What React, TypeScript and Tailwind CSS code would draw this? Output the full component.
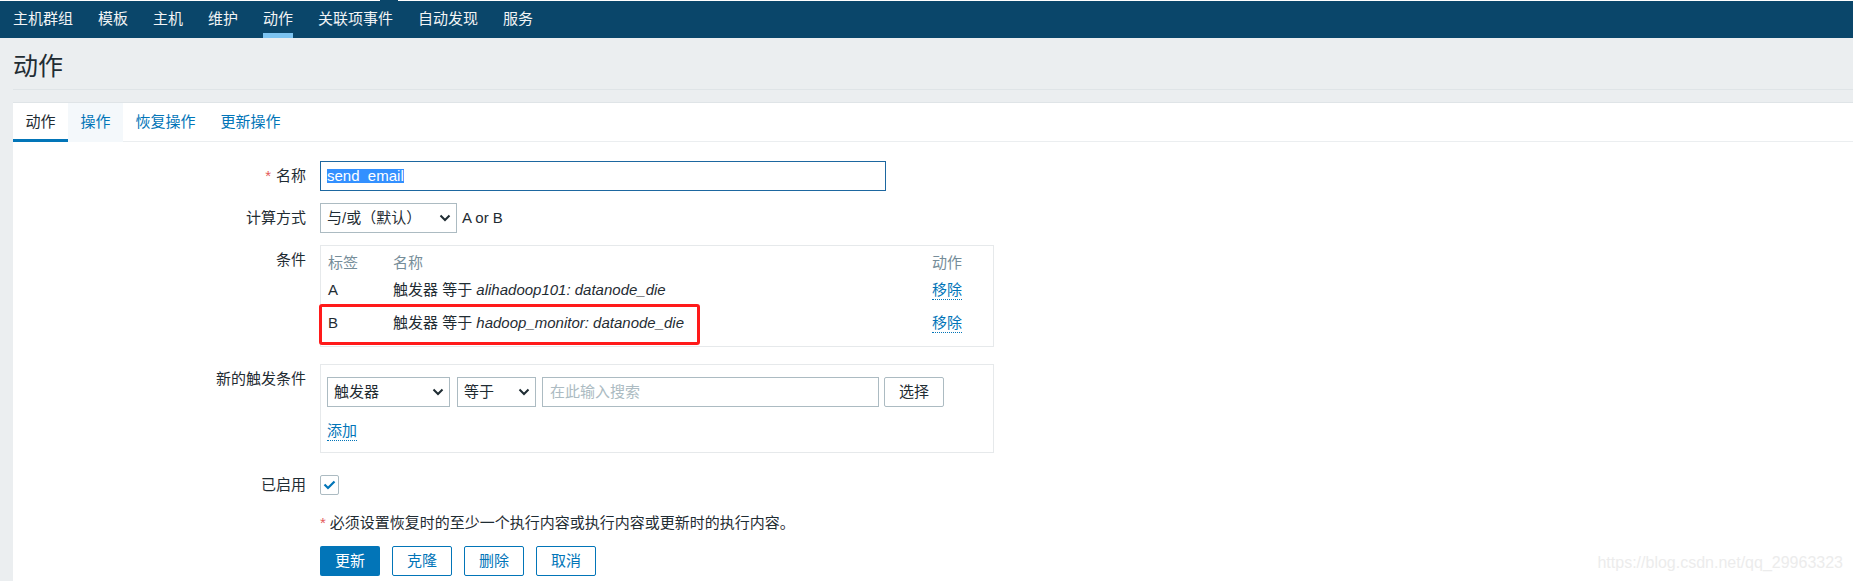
import React from "react";

const NAV = ["主机群组", "模板", "主机", "维护", "动作", "关联项事件", "自动发现", "服务"];
const TABS = ["动作", "操作", "恢复操作", "更新操作"];

function Chevron() {
  return (
    <svg width="12" height="8" viewBox="0 0 12 8" className="shrink-0">
      <path d="M1.5 1.5 6 6l4.5-4.5" stroke="#1f2c33" strokeWidth="2" fill="none" />
    </svg>
  );
}

function Select({ text, width }: { text: string; width: string }) {
  return (
    <div
      className={`${width} h-[30px] border border-[#acbbc2] bg-white flex items-center justify-between pl-[6px] pr-[5px] text-[#1f2c33]`}
    >
      <span className="[text-spacing-trim:space-all]">{text}</span>
      <Chevron />
    </div>
  );
}

function Row({
  label,
  required,
  top,
  children,
  className = "",
}: {
  label: string;
  required?: boolean;
  top?: boolean;
  children: React.ReactNode;
  className?: string;
}) {
  return (
    <div className={`flex ${top ? "items-start" : "items-center"} ${className}`}>
      <div
        className={`w-[293px] shrink-0 text-right text-[#1f2c33] leading-[20px] ${top ? "pt-[5px]" : ""}`}
      >
        {required && <span className="text-[#e45959] mr-[5px]">*</span>}
        {label}
      </div>
      <div className="ml-[14px] flex items-center">{children}</div>
    </div>
  );
}

function RemoveLink() {
  return (
    <span className="text-[#0275b8] border-b border-dotted border-[#0275b8] leading-[19px] inline-block">
      移除
    </span>
  );
}

export default function App() {
  return (
    <div className="h-[581px] overflow-hidden bg-[#ebeef0] flex flex-col font-['Liberation_Sans','Noto_Sans_CJK_SC',sans-serif] text-[15px]">
      {/* top edge */}
      <div className="h-px bg-white flex">
        <div className="ml-[380px] w-[18px] h-px bg-[#0a466a]" />
      </div>

      {/* main nav */}
      <nav className="h-[37px] bg-[#0a466a] flex pl-[13px] gap-[25px] text-[#f2f4f5]">
        {NAV.map((item) => (
          <div key={item} className="relative h-full flex items-center">
            {item}
            {item === "动作" && (
              <div className="absolute left-0 right-0 bottom-0 h-[5px] bg-[#7cc3f0]" />
            )}
          </div>
        ))}
      </nav>

      {/* page title */}
      <div className="ml-[13px] pt-[13px] pb-[8px] border-b border-[#dfe4e7]">
        <h1 className="text-[25px] leading-[30px] text-[#1f2c33]">动作</h1>
      </div>

      {/* panel */}
      <div className="ml-[13px] mt-[12px] flex-1 bg-white border-t border-[#dfe4e7] relative">
        <div className="flex h-[39px] border-b border-[#ebeef0]">
          {TABS.map((t, i) => (
            <div
              key={t}
              className={`h-[39px] px-[12.5px] pt-[3px] flex items-center border-b-[3px] ${
                i === 0
                  ? "border-[#0275b8] text-[#1f2c33]"
                  : i === 1
                    ? "border-transparent text-[#0275b8] bg-[#f4f8fb]"
                    : "border-transparent text-[#0275b8]"
              }`}
            >
              {t}
            </div>
          ))}
        </div>

        <div className="flex flex-col">
          <Row label="名称" required className="mt-[19px]">
            <div className="w-[566px] h-[30px] border border-[#1d67a0] flex items-center pl-[6px]">
              <span className="bg-[#3390ff] text-white leading-[14px]">send_email</span>
            </div>
          </Row>

          <Row label="计算方式" className="mt-[12px]">
            <Select text="与/或（默认）" width="w-[137px]" />
            <span className="ml-[5px] text-[#1f2c33]">A or B</span>
          </Row>

          <Row label="条件" top className="mt-[12px]">
            <div className="relative w-[674px] border border-[#e6e9eb] pt-[4px] pb-[9px] pl-[7px] text-[#1f2c33]">
              <div className="flex h-[26px] items-center text-[#768d99]">
                <div className="w-[65px]">标签</div>
                <div className="flex-1">名称</div>
                <div className="w-[61px]">动作</div>
              </div>
              <div className="flex h-[28px] items-center">
                <div className="w-[65px]">A</div>
                <div className="flex-1">
                  触发器 等于 <i>alihadoop101: datanode_die</i>
                </div>
                <div className="w-[61px]">
                  <RemoveLink />
                </div>
              </div>
              <div className="flex h-[28px] items-center mt-[5px]">
                <div className="w-[65px]">B</div>
                <div className="flex-1">
                  触发器 等于 <i>hadoop_monitor: datanode_die</i>
                </div>
                <div className="w-[61px]">
                  <RemoveLink />
                </div>
              </div>
              <div className="absolute left-[-2px] top-[58px] w-[381px] h-[41px] border-[3px] border-[#ff1a1a] rounded-[3px]" />
            </div>
          </Row>

          <Row label="新的触发条件" top className="mt-[17px]">
            <div className="w-[674px] border border-[#e6e9eb] pt-[12px] pb-[11px] pl-[6px] flex flex-col items-start">
              <div className="flex items-center">
                <Select text="触发器" width="w-[123px]" />
                <div className="ml-[7px]">
                  <Select text="等于" width="w-[79px]" />
                </div>
                <div className="ml-[6px] w-[337px] h-[30px] border border-[#acbbc2] flex items-center pl-[7px] text-[#acbbc2]">
                  在此输入搜索
                </div>
                <div className="ml-[5px] w-[60px] h-[30px] border border-[#acbbc2] rounded-[2px] flex items-center justify-center text-[#1f2c33]">
                  选择
                </div>
              </div>
              <span className="mt-[14px] text-[#0275b8] border-b border-dotted border-[#0275b8] leading-[19px]">
                添加
              </span>
            </div>
          </Row>

          <Row label="已启用" className="mt-[17px] h-[30px]">
            <div className="w-[19px] h-[20px] border border-[#acbbc2] rounded-[2px] flex items-center justify-center">
              <svg width="13" height="10" viewBox="0 0 13 10">
                <path d="M1.5 4.5 5 8l6.5-6.5" stroke="#0275b8" strokeWidth="2.2" fill="none" />
              </svg>
            </div>
          </Row>

          <div className="mt-[13px] ml-[307px] leading-[20px] text-[#1f2c33]">
            <span className="text-[#e45959] mr-[4px]">*</span>
            必须设置恢复时的至少一个执行内容或执行内容或更新时的执行内容。
          </div>

          <div className="mt-[13px] ml-[307px] flex gap-3">
            <div className="w-[60px] h-[30px] rounded-[2px] bg-[#0275b8] text-white flex items-center justify-center">
              更新
            </div>
            {["克隆", "删除", "取消"].map((b) => (
              <div
                key={b}
                className="w-[60px] h-[30px] rounded-[2px] border border-[#0275b8] text-[#0275b8] bg-white flex items-center justify-center"
              >
                {b}
              </div>
            ))}
          </div>
        </div>

        <div className="absolute right-[10px] top-[451px] text-[16px] leading-[18px] text-[#ececec] font-['Liberation_Sans',sans-serif]">
          https://blog.csdn.net/qq_29963323
        </div>
      </div>
    </div>
  );
}
